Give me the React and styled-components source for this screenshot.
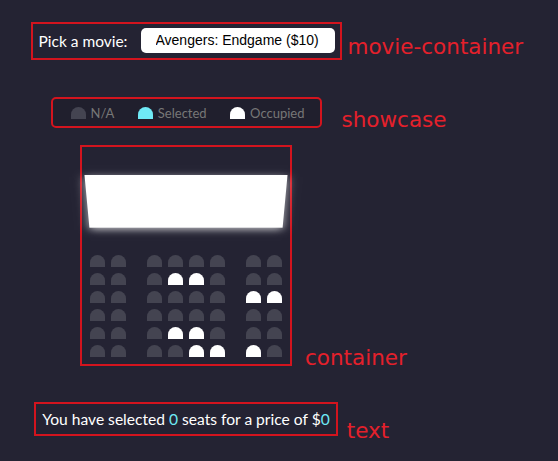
import React from 'react';
import styled, { createGlobalStyle } from 'styled-components';

const GlobalStyle = createGlobalStyle`
  * { box-sizing: border-box; }
  body {
    margin: 0;
    background-color: #242333;
    color: #fff;
    font-family: Lato, "Open Sans", sans-serif;
  }
`;

// occupied seats per row (index 0..7)
const occupied = [[], [3, 4], [6, 7], [], [3, 4], [4, 5, 6]];

const movies = [
  { name: 'Avengers: Endgame', price: 10 },
  { name: 'Joker', price: 12 },
  { name: 'Toy Story 4', price: 8 },
  { name: 'The Lion King', price: 9 },
];

const App = () => {
  return (
    <Page>
      <GlobalStyle />
      <Column>
        <Frame $mt={22} $pad="4px 5px 5px 6px" $w={311}>
          <MovieContainer>
            <label htmlFor="movie">Pick a movie:</label>
            <Select id="movie" defaultValue="10">
              {movies.map((m) => (
                <option key={m.name} value={m.price}>
                  {m.name} (${m.price})
                </option>
              ))}
            </Select>
          </MovieContainer>
          <Tag $left={8} $top={10}>movie-container</Tag>
        </Frame>

        <Frame $mt={37} $pad="0" $w={271} $round>
          <Showcase>
            <li>
              <Seat />
              <small>N/A</small>
            </li>
            <li>
              <Seat $state="selected" />
              <small>Selected</small>
            </li>
            <li>
              <Seat $state="occupied" />
              <small>Occupied</small>
            </li>
          </Showcase>
          <Tag $left={22} $top={8}>showcase</Tag>
        </Frame>

        <Frame $mt={17} $pad="5px 5px 4px 5px">
          <Container>
            <Screen />
            {occupied.map((taken, r) => (
              <Row key={r}>
                {Array.from({ length: 8 }).map((_, i) => (
                  <Seat key={i} $state={taken.includes(i) ? 'occupied' : undefined} />
                ))}
              </Row>
            ))}
          </Container>
          <Tag $left={15} $bottom={-6}>container</Tag>
        </Frame>

        <Frame $mt={36} $pad="5px 6px">
          <Text>
            You have selected <span>0</span> seats for a price of $<span>0</span>
          </Text>
          <Tag $left={11} $top={14}>text</Tag>
        </Frame>
      </Column>
    </Page>
  );
};

export default App;

const Page = styled.div`
  width: 558px;
  min-height: 461px;
`;

const Column = styled.div`
  width: 372px;
  display: flex;
  flex-direction: column;
  align-items: center;
`;

const Frame = styled.div`
  position: relative;
  margin-top: ${(p) => p.$mt}px;
  width: ${(p) => (p.$w ? `${p.$w}px` : 'auto')};
  padding: ${(p) => p.$pad};
  border: 2px solid #d3141e;
  border-radius: ${(p) => (p.$round ? '5px' : '0')};
`;

const Tag = styled.span`
  position: absolute;
  left: calc(100% + ${(p) => p.$left}px);
  ${(p) => (p.$top !== undefined ? `top: ${p.$top}px;` : '')}
  ${(p) => (p.$bottom !== undefined ? `bottom: ${p.$bottom}px;` : '')}
  font-family: "DejaVu Sans", Verdana, sans-serif;
  font-size: 21.5px;
  color: #e4202b;
  white-space: nowrap;
`;

const MovieContainer = styled.div`
  display: flex;
  align-items: center;
  justify-content: space-between;
  font-size: 15.5px;
`;

const Select = styled.select`
  appearance: none;
  -webkit-appearance: none;
  background-color: #fff;
  color: #000;
  border: 0;
  border-radius: 5px;
  font-family: "Liberation Sans", Arial, sans-serif;
  font-size: 14px;
  line-height: 15px;
  padding: 5px 15px;
  outline: none;
`;

const Showcase = styled.ul`
  margin: 0;
  height: 27px;
  padding: 0 15px 0 18px;
  list-style-type: none;
  display: flex;
  justify-content: space-between;
  align-items: center;
  background: rgba(0, 0, 0, 0.1);
  border-radius: 3px;
  color: #777;

  li {
    display: flex;
    align-items: center;
    gap: 5px;
  }

  small {
    font-size: 13px;
  }
`;

const Container = styled.div`
  perspective: 1000px;
  width: 198px;
`;

const Screen = styled.div`
  background-color: #fff;
  height: 70px;
  width: 100%;
  margin: 15px 0;
  transform: rotateX(-45deg);
  box-shadow: 0 3px 10px rgba(255, 255, 255, 0.7);
`;

const Row = styled.div`
  display: flex;

  & > div {
    margin: 3px;
  }
  & > div:nth-child(2) {
    margin-right: 18px;
  }
  & > div:nth-last-child(2) {
    margin-left: 18px;
  }
`;

const Seat = styled.div`
  flex: none;
  width: 15px;
  height: 12px;
  border-top-left-radius: 10px;
  border-top-right-radius: 10px;
  background-color: ${(p) =>
    p.$state === 'selected' ? '#6feaf6' : p.$state === 'occupied' ? '#fff' : '#444451'};
`;

const Text = styled.p`
  margin: 0;
  font-size: 15.6px;
  line-height: 20px;
  white-space: nowrap;

  span {
    color: #6feaf6;
  }
`;
